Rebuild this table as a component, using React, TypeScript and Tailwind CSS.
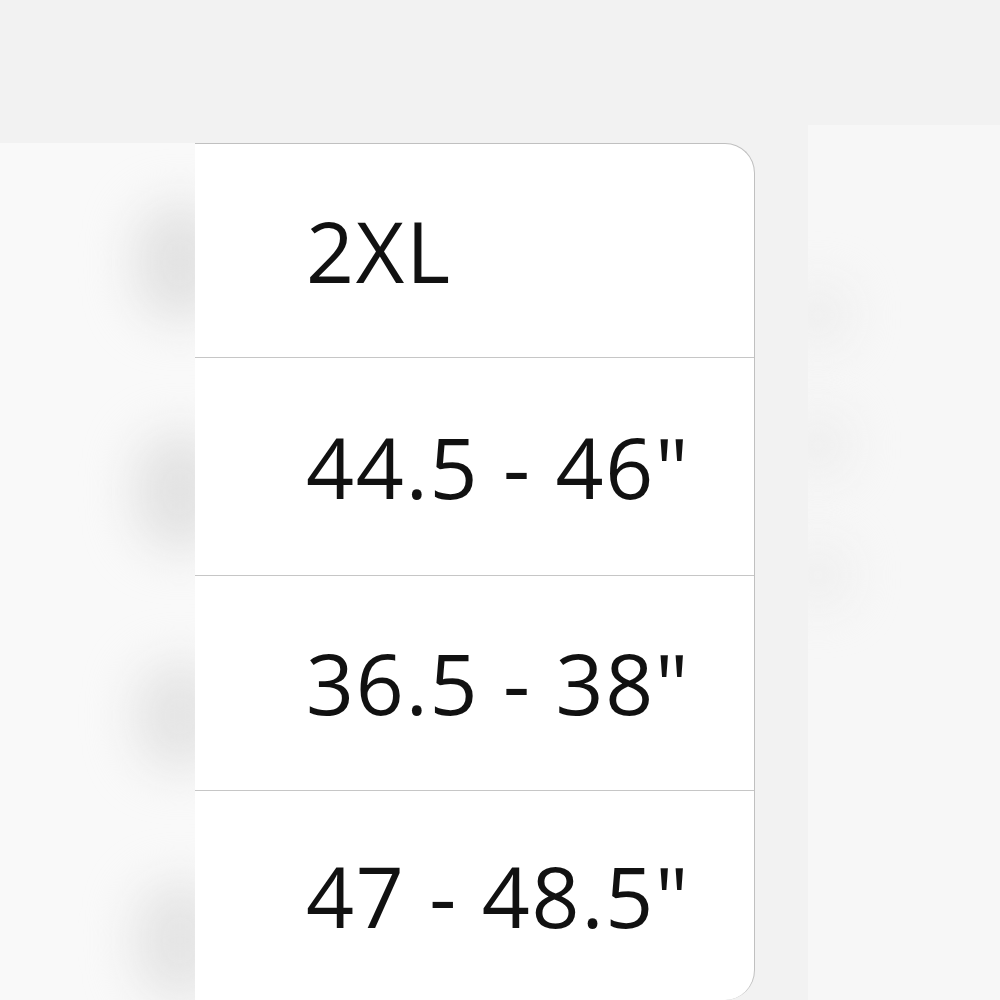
import React from "react";

const rows = [
  { label: "2XL", h: "h-[214px]" },
  { label: "44.5 - 46\"", h: "h-[218px]" },
  { label: "36.5 - 38\"", h: "h-[215px]" },
  { label: "47 - 48.5\"", h: "flex-1" },
];

export default function App() {
  return (
    <div className="w-[1000px] h-[1000px] overflow-hidden bg-[#f2f2f2] flex flex-col" style={{ fontFamily: '"Open Sans", "Noto Sans", sans-serif' }}>
      <div className="h-[143px] shrink-0" />
      <div className="flex flex-1 min-h-0">
        {/* left blurred area */}
        <div className="w-[195px] shrink-0 bg-[#f9f9f9] flex flex-col items-end pt-[60px] gap-[110px] overflow-hidden">
          <div className="w-[90px] h-[120px] mr-[-30px] rounded-full bg-[#e2e2e2] blur-xl" />
          <div className="w-[90px] h-[120px] mr-[-30px] rounded-full bg-[#e2e2e2] blur-xl" />
          <div className="w-[90px] h-[110px] mr-[-30px] rounded-full bg-[#e4e4e4] blur-xl" />
          <div className="w-[90px] h-[120px] mr-[-30px] rounded-full bg-[#e4e4e4] blur-xl" />
        </div>
        {/* card */}
        <div className="w-[560px] shrink-0 h-[857px] bg-white border-t border-r border-[#c0c0c0] rounded-tr-[30px] rounded-br-[30px] flex flex-col text-[#111111]">
          {rows.map((r, i) => (
            <div
              key={i}
              className={`${r.h} shrink-0 flex items-center pl-[111px] ${i < rows.length - 1 ? "border-b border-[#c6c6c6]" : ""}`}
            >
              <span className="text-[84px] leading-none tracking-[1.8px] font-[450]">{r.label}</span>
            </div>
          ))}
        </div>
        {/* right area */}
        <div className="flex-1 flex">
          <div className="w-[53px] shrink-0" />
          <div className="flex-1 bg-[#f7f7f7] -mt-[18px] flex flex-col pt-[160px] gap-[70px] overflow-hidden">
            <div className="w-[60px] h-[60px] ml-[-20px] rounded-full bg-[#ececec] blur-xl" />
            <div className="w-[60px] h-[60px] ml-[-20px] rounded-full bg-[#ececec] blur-xl" />
            <div className="w-[60px] h-[60px] ml-[-20px] rounded-full bg-[#ededed] blur-xl" />
          </div>
        </div>
      </div>
    </div>
  );
}
